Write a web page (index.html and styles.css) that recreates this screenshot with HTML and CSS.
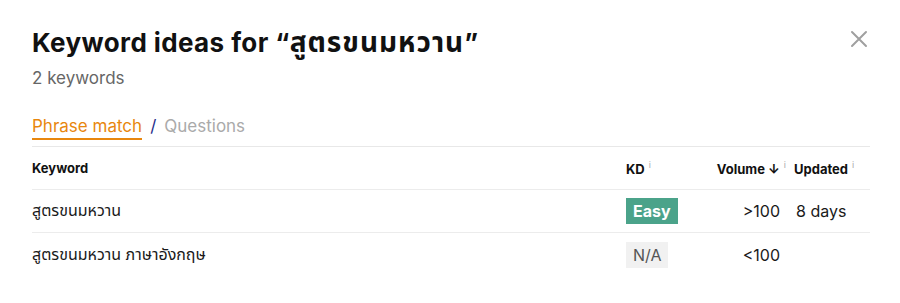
FILE: index.html
```html
<!DOCTYPE html>
<html>
<head>
<meta charset="utf-8">
<link rel="stylesheet" href="styles.css">
</head>
<body>
<div class="modal">
  <button class="close" aria-label="Close">
    <svg width="18" height="18" viewBox="0 0 18 18"><path d="M2 2L16 16M16 2L2 16" stroke="#a0a0a0" stroke-width="2" stroke-linecap="round"/></svg>
  </button>
  <h1 class="title">Keyword ideas for “<span class="th">สูตรขนมหวาน</span>”</h1>
  <div class="subtitle">2 keywords</div>
  <div class="tabs">
    <span class="tab active">Phrase match</span>
    <span class="sep">/</span>
    <span class="tab">Questions</span>
  </div>
  <div class="table">
    <div class="row head">
      <div class="c-kw">Keyword</div>
      <div class="c-kd">KD<sup class="i">i</sup></div>
      <div class="c-vol">Volume <span class="arrow">↓</span><sup class="i">i</sup></div>
      <div class="c-upd">Updated<sup class="i">i</sup></div>
    </div>
    <div class="row">
      <div class="c-kw">สูตรขนมหวาน</div>
      <div class="c-kd"><span class="badge easy">Easy</span></div>
      <div class="c-vol">&gt;100</div>
      <div class="c-upd">8 days</div>
    </div>
    <div class="row last">
      <div class="c-kw">สูตรขนมหวาน ภาษาอังกฤษ</div>
      <div class="c-kd"><span class="badge na">N/A</span></div>
      <div class="c-vol">&lt;100</div>
      <div class="c-upd"></div>
    </div>
  </div>
</div>
</body>
</html>
```
FILE: styles.css
```css
* { box-sizing: border-box; }
html, body { margin: 0; background: #fff; }
body {
  font-family: Inter, "Noto Sans", "Noto Sans Thai", "Liberation Sans", sans-serif;
  color: #1a1a1a;
}
.modal {
  position: relative;
  width: 900px;
  height: 303px;
  padding: 25px 30px 0 32px;
}
.close {
  position: absolute;
  top: 30px;
  right: 32px;
  border: 0;
  background: none;
  padding: 0;
  width: 18px;
  height: 18px;
}
.title {
  margin: 0;
  font-size: 26px;
  line-height: 34px;
  font-weight: 700;
  letter-spacing: 0.4px;
  color: #111;
}
.title .th { font-size: 28px; letter-spacing: 1px; }
.subtitle {
  margin-top: 7px;
  font-size: 17px;
  line-height: 22px;
  color: #666;
}
.tabs {
  margin-top: 26px;
  display: flex;
  align-items: flex-start;
  gap: 7px;
  font-size: 17px;
  line-height: 22px;
}
.tab {
  color: #aaa;
  padding-bottom: 1px;
}
.tab.active {
  color: #e8870e;
  border-bottom: 2px solid #e8870e;
}
.sep { color: #1f2d8a; padding: 0 1px; }
.table {
  margin-top: 6px;
  border-top: 1px solid #e8e8e8;
}
.row {
  display: grid;
  grid-template-columns: 594px 82px 78px auto;
  align-items: center;
  height: 43px;
  border-bottom: 1px solid #ececec;
  font-size: 16px;
}
.row.last { border-bottom: 0; }
.row.head {
  font-size: 13px;
  font-weight: 700;
  color: #111;
}
.c-vol { text-align: right; padding-right: 6px; }
.head .c-vol { padding-right: 0; }
.c-upd { padding-left: 10px; }
.head .c-upd { padding-left: 8px; }
.i {
  font-size: 9px;
  font-weight: 400;
  color: #aaa;
  margin-left: 4px;
  vertical-align: 6px;
}
.arrow { font-weight: 700; }
.badge {
  display: inline-block;
  padding: 3px 6px;
  line-height: 20px;
  font-size: 16px;
}
.badge.easy { background: #4ba38a; color: #fff; font-weight: 700; padding: 3px 7px; }
.badge.na { background: #f1f1f1; color: #555; padding: 3px 7px; }
```
